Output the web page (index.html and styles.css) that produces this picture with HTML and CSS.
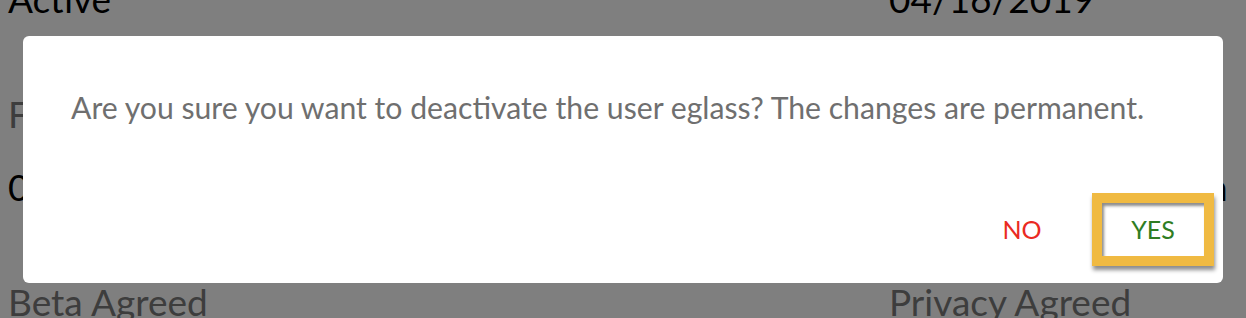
FILE: index.html
```html
<!DOCTYPE html>
<html>
<head>
<meta charset="utf-8">
<link rel="stylesheet" href="styles.css">
</head>
<body>
<div class="page">
  <div class="details">
    <div class="field">
      <div class="label">Status</div>
      <div class="value">Active</div>
    </div>
    <div class="field">
      <div class="label">Created</div>
      <div class="value">04/16/2019</div>
    </div>
    <div class="field">
      <div class="label">First Login</div>
      <div class="value">04/16/2019</div>
    </div>
    <div class="field">
      <div class="label">Role</div>
      <div class="value">Users Administration</div>
    </div>
    <div class="field">
      <div class="label">Beta Agreed</div>
      <div class="value">Yes</div>
    </div>
    <div class="field">
      <div class="label">Privacy Agreed</div>
      <div class="value">Yes</div>
    </div>
  </div>
</div>
<div class="overlay">
  <div class="dialog">
    <p class="message">Are you sure you want to deactivate the user eglass? The changes are permanent.</p>
    <div class="actions">
      <button class="btn btn-no">NO</button>
      <button class="btn btn-yes">YES</button>
    </div>
  </div>
</div>
</body>
</html>
```
FILE: styles.css
```css
html, body {
  margin: 0;
  padding: 0;
  background: #ffffff;
  overflow: hidden;
}
body {
  width: 1246px;
  height: 318px;
  font-family: "Lato", "Noto Sans", sans-serif;
}
.page {
  padding-left: 8px;
}
.details {
  margin-top: -96px;
  display: grid;
  grid-template-columns: 881px 1fr;
}
.field {
  margin-bottom: 71px;
}
.label {
  font-size: 37px;
  line-height: 44px;
  color: #7a7a7a;
  margin-bottom: 29px;
  white-space: nowrap;
}
.value {
  font-size: 37px;
  line-height: 44px;
  color: #000000;
  white-space: nowrap;
}
.overlay {
  position: fixed;
  inset: 0;
  background: rgba(0, 0, 0, 0.5);
  display: flex;
  align-items: center;
  justify-content: center;
}
.dialog {
  width: 1200px;
  height: 247px;
  box-sizing: border-box;
  background: #ffffff;
  border-radius: 6px;
  padding: 49px 9px 17px 48px;
  display: flex;
  flex-direction: column;
  justify-content: space-between;
}
.message {
  margin: 0;
  font-size: 30.2px;
  line-height: 44px;
  color: #6f6f6f;
  white-space: nowrap;
}
.actions {
  display: flex;
  justify-content: flex-end;
  align-items: center;
  gap: 19px;
}
.btn {
  font-family: "Lato", "Noto Sans", sans-serif;
  font-size: 25px;
  background: #ffffff;
  border: none;
  padding: 0;
  width: 102px;
  height: 53px;
  box-sizing: content-box;
  cursor: pointer;
}
.btn-no {
  color: #ea2a22;
}
.btn-yes {
  color: #2f7d23;
  border: 10px solid #f0ba42;
  box-shadow: inset 2px 3px 3px rgba(0, 0, 0, 0.45), 1px 4px 4px rgba(0, 0, 0, 0.45);
}
```
